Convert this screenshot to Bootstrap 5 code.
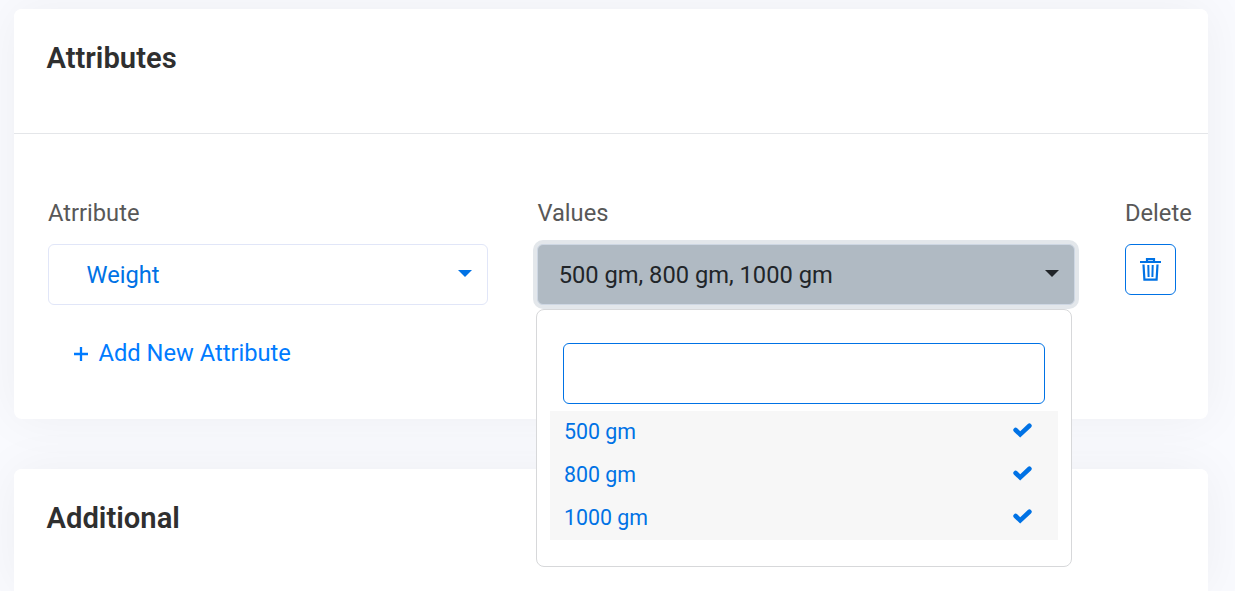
<!DOCTYPE html>
<html lang="en">
<head>
<meta charset="utf-8">
<meta name="viewport" content="width=device-width, initial-scale=1">
<title>Attributes</title>
<link href="https://cdn.jsdelivr.net/npm/bootstrap@5.3.0/dist/css/bootstrap.min.css" rel="stylesheet">
<style>
  body { font-family: Roboto, "Liberation Sans", sans-serif; font-size: 23.7px; line-height: 36px; background: #f9fafe; color: #585858; }
  .page { padding: 9px 27px 0 14px; height: 591px; overflow: hidden; }
  .panel { border: 0; border-radius: 8px; box-shadow: 0 0 50px rgba(8, 15, 20, .05); margin-bottom: 50px; --bs-card-bg: #fff; }
  .panel-prev { height: 100px; margin-top: -150px; }
  .panel-main { height: 410px; }
  .panel-last { height: 122px; margin-bottom: 0; border-radius: 8px 8px 0 0; }
  .panel-head { background: #fff; border-bottom: 1px solid #e4e6e9; border-radius: 8px 8px 0 0 !important; height: 125px; padding: 30px 32.5px; }
  .panel-last .panel-head { height: 122px; border-bottom: 0; }
  .panel-head h4 { font-size: 29.2px; line-height: 38px; font-weight: 600; color: #2f2f2f; }
  .panel-body { padding: 61px 0 0 34px; }
  .col-attr { width: 440px; margin-right: 49.4px; }
  .col-vals { width: 537.6px; margin-right: 50px; }
  .field-label { display: block; height: 49px; white-space: nowrap; }
  .picker { height: 61px; border: 1px solid #e1e6f8; border-radius: 6px; font-size: 23.7px; line-height: 36px; padding: 0 15px 0 37.5px; color: #0072e5; background: #fff; }
  .picker:hover { color: #0072e5; background: #fff; border-color: #e1e6f8; }
  .picker-open, .picker-open:hover { color: #212529; background: #b0bac3; border-color: #ced7e3; padding-left: 20.3px; box-shadow: 0 0 0 4px #e3e7eb; }
  .picker::after { border-top-width: 7px; border-left-width: 7px; border-right-width: 7px; margin: 0 0 3px; }
  .value-menu { top: 114px; left: -1px; width: 536px; height: 258px; padding: 33px 13px 0; border: 1px solid #d7d8da; border-radius: 8px; }
  .value-search { width: 482px; height: 61px; margin: 0 0 7px 13px; border: 1px solid #0072e5; border-radius: 6px; }
  .value-list { background: #f7f7f7; width: 508px; }
  .value-list a { height: 43px; font-size: 21.35px; line-height: 33px; color: #0072e5; padding: 0 26px 2px 13.5px; }
  .value-list a:hover { background: #f7f7f7; color: #0072e5; }
  .tick { margin-bottom: 2px; }
  .btn-trash { width: 51px; height: 51px; border: 1px solid #0072e5; border-radius: 6px; color: #0072e5; padding: 0; }
  .add-link { color: #007bff; margin: 30px 0 0 25.5px; gap: 10px; width: max-content; }
</style>
</head>
<body>
<main class="page">
  <div class="card panel panel-prev"></div>
  <section class="card panel panel-main">
    <div class="card-header panel-head"><h4 class="m-0">Attributes</h4></div>
    <div class="card-body panel-body">
      <div class="d-flex">
        <div class="col-attr">
          <label class="field-label">Atrribute</label>
          <button class="btn picker dropdown-toggle w-100 d-flex align-items-center justify-content-between" type="button">Weight</button>
          <a href="#" class="add-link d-flex align-items-center text-decoration-none">
            <svg width="15" height="15" viewBox="0 0 15 15" fill="none" stroke="currentColor" stroke-width="2.3" style="margin-top:2px"><path d="M7 0v14M0 7h14"/></svg>
            <span>Add New Attribute</span>
          </a>
        </div>
        <div class="col-vals position-relative">
          <label class="field-label">Values</label>
          <button class="btn picker picker-open dropdown-toggle w-100 d-flex align-items-center justify-content-between" type="button">500 gm, 800 gm, 1000 gm</button>
          <div class="dropdown-menu value-menu show">
            <input type="text" class="form-control value-search" aria-label="Search">
            <div class="value-list">
              <a href="#" class="dropdown-item d-flex align-items-center justify-content-between">500 gm <svg class="tick" width="19" height="15" viewBox="0 0 19 15" fill="none" stroke="currentColor" stroke-width="4.6" stroke-linecap="round"><path d="M2.6 7 7.2 11.4 16.4 2.8"/></svg></a>
              <a href="#" class="dropdown-item d-flex align-items-center justify-content-between">800 gm <svg class="tick" width="19" height="15" viewBox="0 0 19 15" fill="none" stroke="currentColor" stroke-width="4.6" stroke-linecap="round"><path d="M2.6 7 7.2 11.4 16.4 2.8"/></svg></a>
              <a href="#" class="dropdown-item d-flex align-items-center justify-content-between">1000 gm <svg class="tick" width="19" height="15" viewBox="0 0 19 15" fill="none" stroke="currentColor" stroke-width="4.6" stroke-linecap="round"><path d="M2.6 7 7.2 11.4 16.4 2.8"/></svg></a>
            </div>
          </div>
        </div>
        <div>
          <label class="field-label">Delete</label>
          <button class="btn btn-trash d-flex align-items-center justify-content-center" type="button" aria-label="Delete">
            <svg width="21" height="23" viewBox="0 0 21 23" fill="none" stroke="currentColor" stroke-width="2.2"><path d="M0 4h21M7 4V1.1h7V4M3.5 6.5l.9 15.2h12.2l.9-15.2"/><path d="M8.3 7l.3 12M12.7 7l-.3 12" stroke-width="2"/></svg>
          </button>
        </div>
      </div>
    </div>
  </section>
  <section class="card panel panel-last">
    <div class="card-header panel-head"><h4 class="m-0">Additional</h4></div>
  </section>
</main>
<script src="https://cdn.jsdelivr.net/npm/bootstrap@5.3.0/dist/js/bootstrap.bundle.min.js"></script>
</body>
</html>
